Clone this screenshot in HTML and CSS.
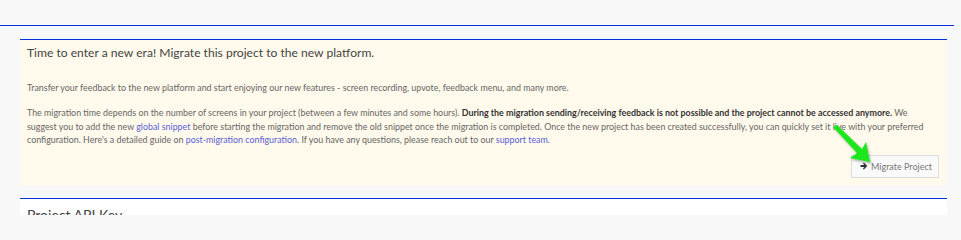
FILE: index.html
```html
<!DOCTYPE html>
<html lang="en">
<head>
<meta charset="utf-8">
<title>Migrate project</title>
<link rel="stylesheet" href="styles.css">
</head>
<body>
<div class="page">
  <div class="topbar"></div>
  <div class="content">
    <section class="card card-migrate">
      <h2 class="card-title">Time to enter a new era! Migrate this project to the new platform.</h2>
      <p class="text">Transfer your feedback to the new platform and start enjoying our new features - screen recording, upvote, feedback menu, and many more.</p>
      <p class="text text-lines">The migration time depends on the number of screens in your project (between a few minutes and some hours). <strong>During the migration sending/receiving feedback is not possible and the project cannot be accessed anymore.</strong> We<br>suggest you to add the new <a href="#">global snippet</a> before starting the migration and remove the old snippet once the migration is completed. Once the new project has been created successfully, you can quickly set it live with your preferred<br>configuration. Here's a detailed guide on <a href="#">post-migration configuration</a>. If you have any questions, please reach out to our <a href="#">support team</a>.</p>
      <div class="actions">
        <button class="btn" type="button"><svg class="btn-icon" width="8" height="8" viewBox="0 0 8 8" aria-hidden="true"><path d="M0.5 3.1 H4.4 L2.9 1.6 L3.9 0.6 L7.3 4 L3.9 7.4 L2.9 6.4 L4.4 4.9 H0.5 Z" fill="#333"/></svg>Migrate Project</button>
      </div>
      <svg class="pointer" width="50" height="50" viewBox="0 0 50 50" aria-hidden="true">
        <defs>
          <filter id="sh" x="-30%" y="-30%" width="160%" height="160%">
            <feDropShadow dx="1" dy="1.5" stdDeviation="1.2" flood-color="#000" flood-opacity="0.35"/>
          </filter>
        </defs>
        <path d="M4 3 L8 1 L33 25 L37 18 L41 38 L21 34 L28 29 Z" fill="#1ee61e" filter="url(#sh)"/>
      </svg>
    </section>
    <section class="card card-api">
      <h2 class="card-title card-title-lg">Project API Key</h2>
    </section>
  </div>
</div>
</body>
</html>
```

FILE: styles.css
```css
html, body {
  margin: 0;
  padding: 0;
}
body {
  background: #f8f8f8;
  font-family: "Lato", "Open Sans", sans-serif;
  color: #666;
  overflow: hidden;
  height: 215px;
}
.page {
  width: 954px;
  height: 215px;
  overflow: hidden;
}
.topbar {
  height: 25px;
  border-bottom: 1px solid #0033dd;
}
.content {
  padding: 13px 7px 0 20px;
}
.card {
  border-top: 1px solid #0033dd;
  position: relative;
}
.card-migrate {
  background: #fffaeb;
  padding: 5px 8px 7px 7px;
}
.card-title {
  margin: 0;
  font-size: 12.1px;
  font-weight: 400;
  color: #444;
  line-height: 16px;
}
.text {
  margin: 20px 0 0;
  font-size: 8.9px;
  line-height: 13.6px;
  white-space: nowrap;
}
.text-lines {
  margin-top: 11.7px;
}
.text strong {
  color: #333;
  font-weight: 700;
}
.text a {
  color: #5b60d8;
  text-decoration: none;
}
.actions {
  display: flex;
  justify-content: flex-end;
  margin-top: 7.7px;
}
.btn {
  height: 23px;
  padding: 0 6px 0 8px;
  border: 1px solid #dcdcdc;
  background: #fafafa;
  color: #777;
  font-family: inherit;
  font-size: 9px;
  white-space: nowrap;
  display: flex;
  align-items: center;
  gap: 3px;
}
.btn-icon {
  display: block;
}
.pointer {
  position: absolute;
  left: 809px;
  top: 84px;
  pointer-events: none;
}
.card-api {
  margin-top: 13px;
  background: #fff;
  padding: 7px;
  height: 40px;
}
.card-title-lg {
  font-size: 14px;
  line-height: 18px;
}
```
